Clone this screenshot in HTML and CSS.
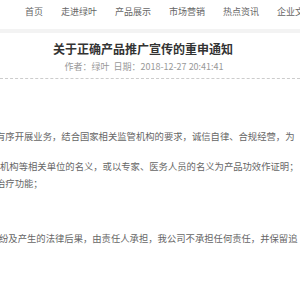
FILE: index.html
```html
<!DOCTYPE html>
<html lang="zh-CN">
<head>
    <meta charset="UTF-8">
    <meta name="viewport" content="width=device-width, initial-scale=1.0">
    <title>关于正确产品推广宣传的重申通知</title>
    <link rel="stylesheet" href="styles.css">
</head>
<body>
    <div class="nav">
        <a href="#">首页</a>
        <a href="#">走进绿叶</a>
        <a href="#">产品展示</a>
        <a href="#">市场营销</a>
        <a href="#">热点资讯</a>
        <a href="#">企业文化</a>
    </div>
    <div class="article">
        <div class="head">
            <h1>关于正确产品推广宣传的重申通知</h1>
            <p class="meta">作者：绿叶&nbsp;&nbsp;日期：2018-12-27 20:41:41</p>
        </div>
        <div class="content">
            <p class="first">有序开展业务，结合国家相关监管机构的要求，诚信自律、合规经营，为</p>
            <p>
                <span class="line">机构等相关单位的名义，或以专家、医务人员的名义为产品功效作证明；</span>
                <span class="line cut">治疗功能；</span>
            </p>
            <p class="last">纷及产生的法律后果，由责任人承担，我公司不承担任何责任，并保留追</p>
        </div>
    </div>
</body>
</html>
```
FILE: styles.css
```css
body {
    margin: 0;
    font-family: "Noto Sans CJK SC", "Microsoft YaHei", sans-serif;
    background-color: #fff;
    overflow: hidden;
}
.nav {
    display: flex;
    gap: 18px;
    height: 33px;
    padding-left: 25px;
    align-items: center;
    padding-bottom: 5px;
    box-sizing: border-box;
    border-bottom: 4px solid #f3f3f3;
    white-space: nowrap;
}
.nav a {
    font-size: 9px;
    line-height: 12px;
    color: #666;
    text-decoration: none;
}
.head {
    text-align: center;
    padding: 8px 0 5px;
    border-bottom: 1px dashed #ccc;
}
.head h1 {
    margin: 0 0 0 -14px;
    font-size: 12px;
    line-height: 16px;
    color: #333;
}
.meta {
    margin: 4px 0 0 -12px;
    font-size: 9px;
    line-height: 12px;
    color: #999;
}
.content {
    padding-top: 49px;
}
.content p {
    margin: 13px 0 0;
    font-size: 9.33px;
    line-height: 17px;
    color: #666;
    white-space: nowrap;
}
.content .line {
    display: block;
}
.content .cut {
    margin-left: -4px;
}
.content p.first {
    margin-top: 0;
    text-indent: -4px;
}
.content p.last {
    margin-top: 38px;
    text-indent: -1px;
}
```
